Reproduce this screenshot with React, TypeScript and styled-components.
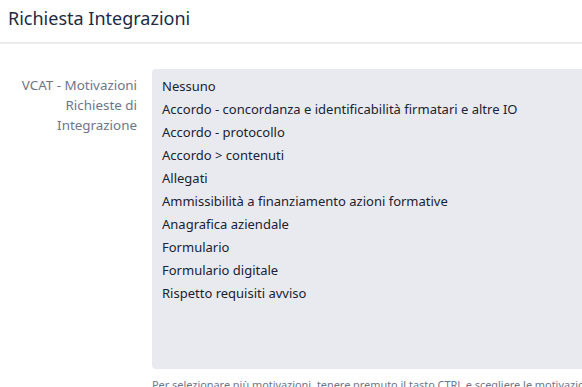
import React from "react";
import styled, { createGlobalStyle } from "styled-components";

const GlobalStyle = createGlobalStyle`
  body {
    margin: 0;
    background: #ffffff;
    font-family: "Noto Sans", "Open Sans", sans-serif;
    overflow: hidden;
  }
`;

const Page = styled.div`
  width: 582px;
  height: 387px;
  overflow: hidden;
`;

const Header = styled.header`
  height: 44px;
  padding: 0 8px;
  display: flex;
  align-items: center;
  border-bottom: 2px solid #e9ebef;
  box-sizing: border-box;
`;

const Title = styled.h1`
  margin: 0;
  margin-top: -6px;
  font-size: 18px;
  font-weight: 400;
  color: #1d2a44;
`;

const FormRow = styled.div`
  display: grid;
  grid-template-columns: 137px 1fr;
  column-gap: 15px;
  padding-top: 25px;
`;

const Label = styled.label`
  text-align: right;
  font-size: 13.4px;
  line-height: 20px;
  color: #6c7689;
  padding-top: 6px;
  white-space: nowrap;
`;

const Field = styled.div`
  display: flex;
  flex-direction: column;
  min-width: 0;
`;

const Select = styled.div`
  width: 460px;
  height: 300px;
  background: #e9eaf0;
  border-radius: 4px;
  padding: 6px 10px;
  box-sizing: border-box;
  display: flex;
  flex-direction: column;
`;

const Option = styled.div`
  font-size: 13px;
  line-height: 23px;
  color: #1a2233;
  white-space: nowrap;
`;

const Help = styled.div`
  margin-top: 8px;
  font-size: 10.9px;
  line-height: 16px;
  color: #6c7689;
  white-space: nowrap;
`;

const options = [
  "Nessuno",
  "Accordo - concordanza e identificabilità firmatari e altre IO",
  "Accordo - protocollo",
  "Accordo > contenuti",
  "Allegati",
  "Ammissibilità a finanziamento azioni formative",
  "Anagrafica aziendale",
  "Formulario",
  "Formulario digitale",
  "Rispetto requisiti avviso",
];

const App = () => {
  return (
    <Page>
      <GlobalStyle />
      <Header>
        <Title>Richiesta Integrazioni</Title>
      </Header>
      <FormRow>
        <Label>
          VCAT - Motivazioni
          <br />
          Richieste di
          <br />
          Integrazione
        </Label>
        <Field>
          <Select>
            {options.map((o) => (
              <Option key={o}>{o}</Option>
            ))}
          </Select>
          <Help>
            Per selezionare più motivazioni, tenere premuto il tasto CTRL e
            scegliere le motivazioni
          </Help>
        </Field>
      </FormRow>
    </Page>
  );
};

export default App;
